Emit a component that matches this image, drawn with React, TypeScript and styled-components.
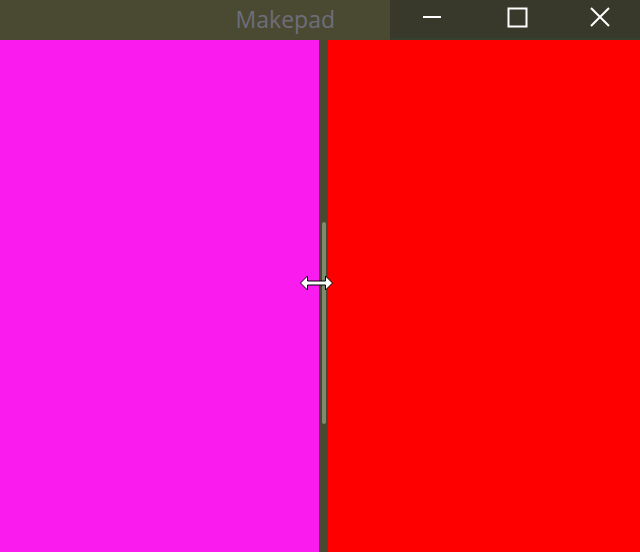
import React from "react";
import styled, { createGlobalStyle } from "styled-components";

const Global = createGlobalStyle`
  html, body { margin: 0; padding: 0; background: #4a4a30; }
  body { font-family: "Open Sans", "Noto Sans", sans-serif; }
`;

const Window = styled.div`
  width: 640px;
  height: 552px;
  display: flex;
  flex-direction: column;
  overflow: hidden;
`;

const TitleBar = styled.div`
  height: 40px;
  display: flex;
  flex-shrink: 0;
`;

const Caption = styled.div`
  width: 390px;
  background: #4a4932;
  display: flex;
  align-items: center;
  justify-content: flex-end;
  padding-right: 55px;
  box-sizing: border-box;
  color: #6e6e7a;
  font-size: 23px;
  padding-bottom: 2px;
`;

const Controls = styled.div`
  flex: 1;
  display: flex;
  background: #39392b;
  border-bottom: 2px solid #33402f;
`;

const WinButton = styled.div<{ $width: number }>`
  width: ${(p) => p.$width}px;
  display: flex;
  align-items: center;
  justify-content: center;
  padding-bottom: 4px;
`;

const Body = styled.div`
  flex: 1;
  display: flex;
  position: relative;
`;

const Panel = styled.div<{ $color: string; $width?: number }>`
  background: ${(p) => p.$color};
  ${(p) => (p.$width ? `width: ${p.$width}px;` : "flex: 1;")}
`;

const Splitter = styled.div`
  width: 9px;
  background: #49492f;
  display: flex;
  justify-content: center;
  padding-top: 182px;
  box-sizing: border-box;
`;

const Handle = styled.div`
  width: 4px;
  height: 202px;
  border-radius: 2px;
  background: #7f8a70;
`;

const Cursor = styled.svg`
  position: absolute;
  left: 299px;
  top: 234px;
`;

export default function App() {
  return (
    <Window>
      <Global />
      <TitleBar>
        <Caption>Makepad</Caption>
        <Controls>
          <WinButton $width={84}>
            <svg width="20" height="20" viewBox="0 0 20 20">
              <rect x="1" y="9" width="18" height="2" fill="#ffffff" />
            </svg>
          </WinButton>
          <WinButton $width={86}>
            <svg width="21" height="21" viewBox="0 0 21 21">
              <rect x="1.5" y="1.5" width="18" height="18" fill="none" stroke="#ffffff" strokeWidth="2" />
            </svg>
          </WinButton>
          <WinButton $width={80}>
            <svg width="22" height="22" viewBox="0 0 22 22">
              <path d="M2 2 L20 20 M20 2 L2 20" stroke="#ffffff" strokeWidth="2" />
            </svg>
          </WinButton>
        </Controls>
      </TitleBar>
      <Body>
        <Panel $color="#fa1bee" $width={319} />
        <Splitter>
          <Handle />
        </Splitter>
        <Panel $color="#fe0000" />
        <Cursor width="35" height="18" viewBox="0 0 35 18">
          <path
            d="M1.5 9 L8.5 2 L8.5 7 L26.5 7 L26.5 2 L33.5 9 L26.5 16 L26.5 11 L8.5 11 L8.5 16 Z"
            fill="#ffffff"
            stroke="#000000"
            strokeWidth="1"
          />
        </Cursor>
      </Body>
    </Window>
  );
}
